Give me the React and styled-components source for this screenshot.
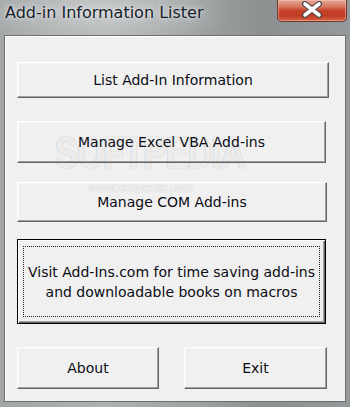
import React from "react";
import styled, { createGlobalStyle } from "styled-components";

const GlobalStyle = createGlobalStyle`
  html, body { margin: 0; padding: 0; overflow: hidden; }
  body { background: #9ea2a4; }
`;

const Window = styled.div`
  width: 350px;
  height: 407px;
  display: flex;
  flex-direction: column;
  background:
    radial-gradient(ellipse 130px 40px at 100px 12px, rgba(208,211,211,0.75), rgba(208,211,211,0) 100%),
    linear-gradient(90deg, #a2a6a7 0%, #aeb1b2 30%, #a0a3a4 55%, #8c9091 75%, #94989a 100%);
  font-family: "DejaVu Sans", Verdana, sans-serif;
`;

const TitleBar = styled.div`
  height: 35px;
  display: flex;
  justify-content: space-between;
  align-items: flex-start;
  padding-left: 5px;
  flex-shrink: 0;
`;

const Title = styled.div`
  margin-top: 3px;
  font-family: "DejaVu Sans", Verdana, sans-serif;
  font-size: 16px;
  color: #15202a;
  text-shadow: 0 0 6px rgba(255, 255, 255, 0.8), 0 0 2px rgba(255, 255, 255, 0.6);
`;

const CloseButton = styled.div`
  width: 70px;
  height: 22px;
  margin-right: 3px;
  box-sizing: border-box;
  border: 1px solid #6e3a30;
  border-top: none;
  border-radius: 0 0 5px 5px;
  background: linear-gradient(180deg, #e3a898 0%, #d77a63 30%, #c8432c 50%, #c13a23 75%, #d9664a 100%);
  box-shadow: inset 0 0 0 1px rgba(255, 200, 190, 0.45);
  display: flex;
  align-items: flex-start;
  justify-content: center;
  padding-top: 1px;
`;

const Client = styled.div`
  position: relative;
  flex: 1;
  margin: 0 4px 5px 4px;
  border: 1px solid #6f6f6f;
  background: #f0f0f0;
  box-shadow: inset 1px 1px 0 #ffffff;
  display: flex;
  flex-direction: column;
  align-items: flex-start;
  padding: 26px 0 0 12px;
  overflow: hidden;
`;

const Button = styled.div`
  position: relative;
  z-index: 1;
  box-sizing: border-box;
  width: ${(p) => p.$w}px;
  height: ${(p) => p.$h}px;
  margin-top: ${(p) => p.$mt || 0}px;
  background: transparent;
  border-top: 1px solid #ffffff;
  border-left: 1px solid #ffffff;
  border-right: 1px solid #646464;
  border-bottom: 1px solid #646464;
  box-shadow: inset -1px -1px 0 #a0a0a0, inset 1px 1px 0 #f4f4f4;
  display: flex;
  align-items: center;
  justify-content: center;
  font-size: 14px;
  color: #0c0c14;
  text-align: center;
  line-height: 20px;
`;

const DefaultButton = styled(Button)`
  border: 1px solid #000000;
  box-shadow: inset 1px 1px 0 #ffffff, inset -1px -1px 0 #646464, inset -2px -2px 0 #a0a0a0;
  padding: 6px 5px 6px 5px;
  align-items: stretch;
`;

const FocusRing = styled.div`
  flex: 1;
  border: 1px dotted #222;
  display: flex;
  align-items: center;
  justify-content: center;
  padding-top: 1px;
`;

const Row = styled.div`
  display: flex;
  gap: 25px;
  margin-top: 23px;
`;

const WatermarkBig = styled.div`
  position: absolute;
  left: 50px;
  top: 92px;
  font-family: "Liberation Sans", Arial, sans-serif;
  font-size: 44px;
  font-weight: bold;
  letter-spacing: -1px;
  transform: scaleX(0.78);
  transform-origin: left top;
  color: rgba(255, 255, 255, 0.75);
  text-shadow: 0 0 1px rgba(90, 90, 90, 0.3), 0 0 2px rgba(90, 90, 90, 0.15);
  z-index: 0;
  pointer-events: none;
`;

const WatermarkSmall = styled.div`
  position: absolute;
  left: 84px;
  top: 145px;
  font-family: "Liberation Sans", Arial, sans-serif;
  font-size: 12px;
  font-style: italic;
  color: rgba(255, 255, 255, 0.9);
  text-shadow: 0 0 1px rgba(90, 90, 90, 0.45);
  z-index: 0;
  pointer-events: none;
`;

export default function App() {
  return (
    <>
      <GlobalStyle />
      <Window>
        <TitleBar>
          <Title>Add-in Information Lister</Title>
          <CloseButton>
            <svg width="24" height="17" viewBox="0 0 24 17">
              <path
                d="M5 3 L19 14 M19 3 L5 14"
                stroke="#4a4a4a"
                strokeWidth="6"
                strokeLinecap="round"
              />
              <path
                d="M5 3 L19 14 M19 3 L5 14"
                stroke="#ffffff"
                strokeWidth="3.6"
                strokeLinecap="round"
              />
            </svg>
          </CloseButton>
        </TitleBar>
        <Client>
          <WatermarkBig>SOFTPEDIA</WatermarkBig>
          <WatermarkSmall>www.softpedia.com</WatermarkSmall>
          <Button $w={312} $h={36}>List Add-In Information</Button>
          <Button $w={309} $h={42} $mt={23}>Manage Excel VBA Add-ins</Button>
          <Button $w={310} $h={40} $mt={19}>Manage COM Add-ins</Button>
          <DefaultButton $w={309} $h={85} $mt={17}>
            <FocusRing>
              Visit Add-Ins.com for time saving add-ins
              <br />
              and downloadable books on macros
            </FocusRing>
          </DefaultButton>
          <Row>
            <Button $w={142} $h={42}>About</Button>
            <Button $w={143} $h={42}>Exit</Button>
          </Row>
        </Client>
      </Window>
    </>
  );
}
